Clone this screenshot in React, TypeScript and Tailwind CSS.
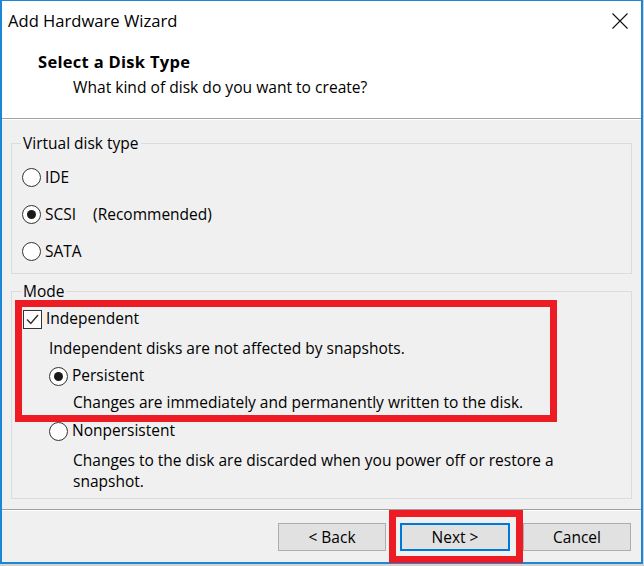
import React from "react"

const Radio = ({ checked }: { checked?: boolean }) => (
  <span className="w-[19px] h-[19px] shrink-0 rounded-full border border-[#333333] bg-white flex items-center justify-center">
    {checked && <span className="w-[9px] h-[9px] rounded-full bg-[#1a1a1a]" />}
  </span>
)

const Checkbox = () => (
  <span className="w-[19px] h-[19px] shrink-0 border border-[#333333] bg-white flex items-center justify-center">
    <svg width="15" height="15" viewBox="0 0 15 15" fill="none">
      <path d="M2 7.5 L5.8 11.5 L13 3" stroke="#333333" strokeWidth="1.5" />
    </svg>
  </span>
)

const Button = ({ label, focused }: { label: string; focused?: boolean }) => (
  <button
    className={
      focused
        ? "w-[110px] h-[28px] bg-[#e1e1e1] border-2 border-[#0078d7] text-[15.5px] leading-[20px] text-black"
        : "w-[108px] h-[28px] bg-[#e1e1e1] border border-[#adadad] text-[15.5px] leading-[20px] text-black"
    }
  >
    {label}
  </button>
)

export default function App() {
  return (
    <div className="w-[644px] h-[566px] bg-[#d4d4d4] overflow-hidden font-['Open_Sans',sans-serif] text-black">
      <div className="w-[643px] h-[564px] border-t border-l-2 border-r-2 border-b-2 border-[#1c87d9] bg-[#f0f0f0] flex flex-col">
        {/* header */}
        <div className="h-[117px] bg-white">
          <div className="h-[40px] flex items-center justify-between pl-[6px] pr-[13px]">
            <span className="text-[16.6px] leading-[20px]">Add Hardware Wizard</span>
            <svg width="16" height="16" viewBox="0 0 16 16">
              <path d="M0.5 0.5 L15.5 15.5 M15.5 0.5 L0.5 15.5" stroke="#111111" strokeWidth="1.1" />
            </svg>
          </div>
          <div className="mt-[11px] pl-[36px] text-[16.5px] tracking-[0.3px] leading-[20px] font-bold">Select a Disk Type</div>
          <div className="mt-[5px] pl-[71px] text-[15.6px] leading-[20px]">What kind of disk do you want to create?</div>
        </div>
        <div className="h-px bg-[#a0a0a0]" />
        <div className="h-px bg-white" />

        {/* body */}
        <div className="h-[389px] px-[9px] text-[15.5px]">
          <fieldset className="mt-[13px] border border-[#dcdcdc] pt-[6px] pb-[3px]">
            <legend className="ml-[9px] px-[2px] leading-[20px]">Virtual disk type</legend>
            <div className="h-[37px] pl-[10px] flex items-center gap-[4px]">
              <Radio />
              <span>IDE</span>
            </div>
            <div className="h-[37px] pl-[10px] flex items-center gap-[4px]">
              <Radio checked />
              <span>SCSI</span>
              <span className="ml-[13px]">(Recommended)</span>
            </div>
            <div className="h-[37px] pl-[10px] flex items-center gap-[4px]">
              <Radio />
              <span>SATA</span>
            </div>
          </fieldset>

          <fieldset className="mt-[7px] border border-[#dcdcdc] pb-[6px]">
            <legend className="ml-[9px] px-[2px] leading-[20px]">Mode</legend>
            <div className="-mt-px ml-[3px] w-[542px] border-[7px] border-[#ed1c24] pb-[3px]">
              <div className="h-[24px] pl-[1px] flex items-center gap-[4px]">
                <Checkbox />
                <span>Independent</span>
              </div>
              <div className="mt-[7px] pl-[27px] leading-[20px]">Independent disks are not affected by snapshots.</div>
              <div className="mt-[6px] h-[24px] pl-[27px] flex items-center gap-[4px]">
                <Radio checked />
                <span>Persistent</span>
              </div>
              <div className="mt-[4px] pl-[51px] leading-[20px]">Changes are immediately and permanently written to the disk.</div>
            </div>
            <div className="h-[18px] pl-[37px] flex items-center gap-[4px]">
              <Radio />
              <span>Nonpersistent</span>
            </div>
            <div className="mt-[10px] pl-[61px] leading-[21px]">
              Changes to the disk are discarded when you power off or restore a
              <br />
              snapshot.
            </div>
          </fieldset>
        </div>

        <div className="h-px bg-[#a0a0a0]" />
        <div className="h-px bg-white" />

        {/* footer */}
        <div className="h-[51px] flex items-start justify-end pr-[10px]">
          <div className="mt-[12px] mr-[3px]">
            <Button label="< Back" />
          </div>
          <div className="-mt-px border-[7px] border-[#ed1c24] pl-[4px] pr-[6px] pt-[6px] pb-[5px]">
            <Button label="Next >" focused />
          </div>
          <div className="mt-[12px]">
            <Button label="Cancel" />
          </div>
        </div>
      </div>
    </div>
  )
}
